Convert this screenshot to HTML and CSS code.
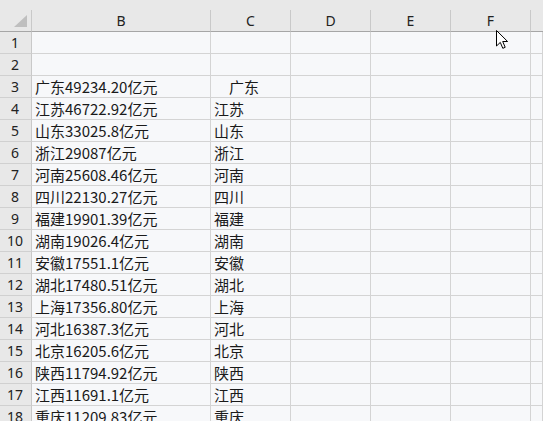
FILE: index.html
```html
<!DOCTYPE html>
<html lang="zh">
<head>
<meta charset="utf-8">
<link rel="stylesheet" href="styles.css">
</head>
<body>
<div class="app">
  <div class="topband"></div>
  <div class="sheet">
    <div class="corner"><span class="tri"></span></div>
    <div class="colh">B</div>
    <div class="colh">C</div>
    <div class="colh">D</div>
    <div class="colh">E</div>
    <div class="colh">F</div>
    <div class="colh last"></div>

    <div class="rowh">1</div><div class="cell"></div><div class="cell"></div><div class="cell"></div><div class="cell"></div><div class="cell"></div><div class="cell"></div>
    <div class="rowh">2</div><div class="cell"></div><div class="cell"></div><div class="cell"></div><div class="cell"></div><div class="cell"></div><div class="cell"></div>
    <div class="rowh">3</div><div class="cell">广东49234.20亿元</div><div class="cell">　广东</div><div class="cell"></div><div class="cell"></div><div class="cell"></div><div class="cell"></div>
    <div class="rowh">4</div><div class="cell">江苏46722.92亿元</div><div class="cell">江苏</div><div class="cell"></div><div class="cell"></div><div class="cell"></div><div class="cell"></div>
    <div class="rowh">5</div><div class="cell">山东33025.8亿元</div><div class="cell">山东</div><div class="cell"></div><div class="cell"></div><div class="cell"></div><div class="cell"></div>
    <div class="rowh">6</div><div class="cell">浙江29087亿元</div><div class="cell">浙江</div><div class="cell"></div><div class="cell"></div><div class="cell"></div><div class="cell"></div>
    <div class="rowh">7</div><div class="cell">河南25608.46亿元</div><div class="cell">河南</div><div class="cell"></div><div class="cell"></div><div class="cell"></div><div class="cell"></div>
    <div class="rowh">8</div><div class="cell">四川22130.27亿元</div><div class="cell">四川</div><div class="cell"></div><div class="cell"></div><div class="cell"></div><div class="cell"></div>
    <div class="rowh">9</div><div class="cell">福建19901.39亿元</div><div class="cell">福建</div><div class="cell"></div><div class="cell"></div><div class="cell"></div><div class="cell"></div>
    <div class="rowh">10</div><div class="cell">湖南19026.4亿元</div><div class="cell">湖南</div><div class="cell"></div><div class="cell"></div><div class="cell"></div><div class="cell"></div>
    <div class="rowh">11</div><div class="cell">安徽17551.1亿元</div><div class="cell">安徽</div><div class="cell"></div><div class="cell"></div><div class="cell"></div><div class="cell"></div>
    <div class="rowh">12</div><div class="cell">湖北17480.51亿元</div><div class="cell">湖北</div><div class="cell"></div><div class="cell"></div><div class="cell"></div><div class="cell"></div>
    <div class="rowh">13</div><div class="cell">上海17356.80亿元</div><div class="cell">上海</div><div class="cell"></div><div class="cell"></div><div class="cell"></div><div class="cell"></div>
    <div class="rowh">14</div><div class="cell">河北16387.3亿元</div><div class="cell">河北</div><div class="cell"></div><div class="cell"></div><div class="cell"></div><div class="cell"></div>
    <div class="rowh">15</div><div class="cell">北京16205.6亿元</div><div class="cell">北京</div><div class="cell"></div><div class="cell"></div><div class="cell"></div><div class="cell"></div>
    <div class="rowh">16</div><div class="cell">陕西11794.92亿元</div><div class="cell">陕西</div><div class="cell"></div><div class="cell"></div><div class="cell"></div><div class="cell"></div>
    <div class="rowh">17</div><div class="cell">江西11691.1亿元</div><div class="cell">江西</div><div class="cell"></div><div class="cell"></div><div class="cell"></div><div class="cell"></div>
    <div class="rowh">18</div><div class="cell">重庆11209.83亿元</div><div class="cell">重庆</div><div class="cell"></div><div class="cell"></div><div class="cell"></div><div class="cell"></div>
  </div>
  <svg class="cursor" width="14" height="20" viewBox="0 0 14 20">
    <path d="M0.5 0.5 L0.5 16 L4.3 12.4 L6.8 18.3 L9.2 17.3 L6.7 11.5 L11.6 11.5 Z" fill="#ffffff" stroke="#000000" stroke-width="1" stroke-linejoin="miter"/>
  </svg>
</div>
</body>
</html>
```

FILE: styles.css
```css
html, body {
  margin: 0;
  padding: 0;
  background: #f7f8fa;
  overflow: hidden;
}

.app {
  position: relative;
  width: 543px;
  height: 421px;
  overflow: hidden;
  font-family: "Noto Sans CJK SC", "Noto Sans", sans-serif;
}

.topband {
  height: 10px;
  background: #e8e8e8;
}

.sheet {
  display: grid;
  grid-template-columns: 32px 179px 80px 80px 80px 80px 1fr;
  grid-auto-rows: 22px;
}

.sheet > div {
  box-sizing: border-box;
}

.corner {
  position: relative;
  background: #e8e8e8;
  border-right: 1px solid #c9c9c9;
  border-bottom: 1px solid #a6a6a6;
}

.tri {
  position: absolute;
  right: 4px;
  bottom: 4px;
  width: 0;
  height: 0;
  border-left: 13px solid transparent;
  border-bottom: 12px solid #bfbfbf;
}

.colh {
  background: #e8e8e8;
  border-right: 1px solid #c9c9c9;
  border-bottom: 1px solid #a6a6a6;
  display: flex;
  align-items: center;
  justify-content: center;
  font-family: "Noto Sans", "Open Sans", sans-serif;
  font-size: 14px;
  color: #222222;
  padding-bottom: 1px;
}

.colh.last {
  border-right: none;
}

.rowh {
  background: #e8e8e8;
  border-right: 1px solid #c9c9c9;
  border-bottom: 1px solid #d0d0d0;
  display: flex;
  align-items: center;
  justify-content: center;
  font-family: "Noto Sans", "Open Sans", sans-serif;
  font-size: 14px;
  color: #222222;
  padding-right: 1px;
}

.cell {
  background: #f7f8fa;
  border-right: 1px solid #d4d4d4;
  border-bottom: 1px solid #d4d4d4;
  display: flex;
  align-items: center;
  padding-left: 3px;
  font-size: 15px;
  color: #1a1a1a;
  white-space: pre;
  overflow: visible;
}

.cursor {
  position: absolute;
  left: 496px;
  top: 30px;
}
```
